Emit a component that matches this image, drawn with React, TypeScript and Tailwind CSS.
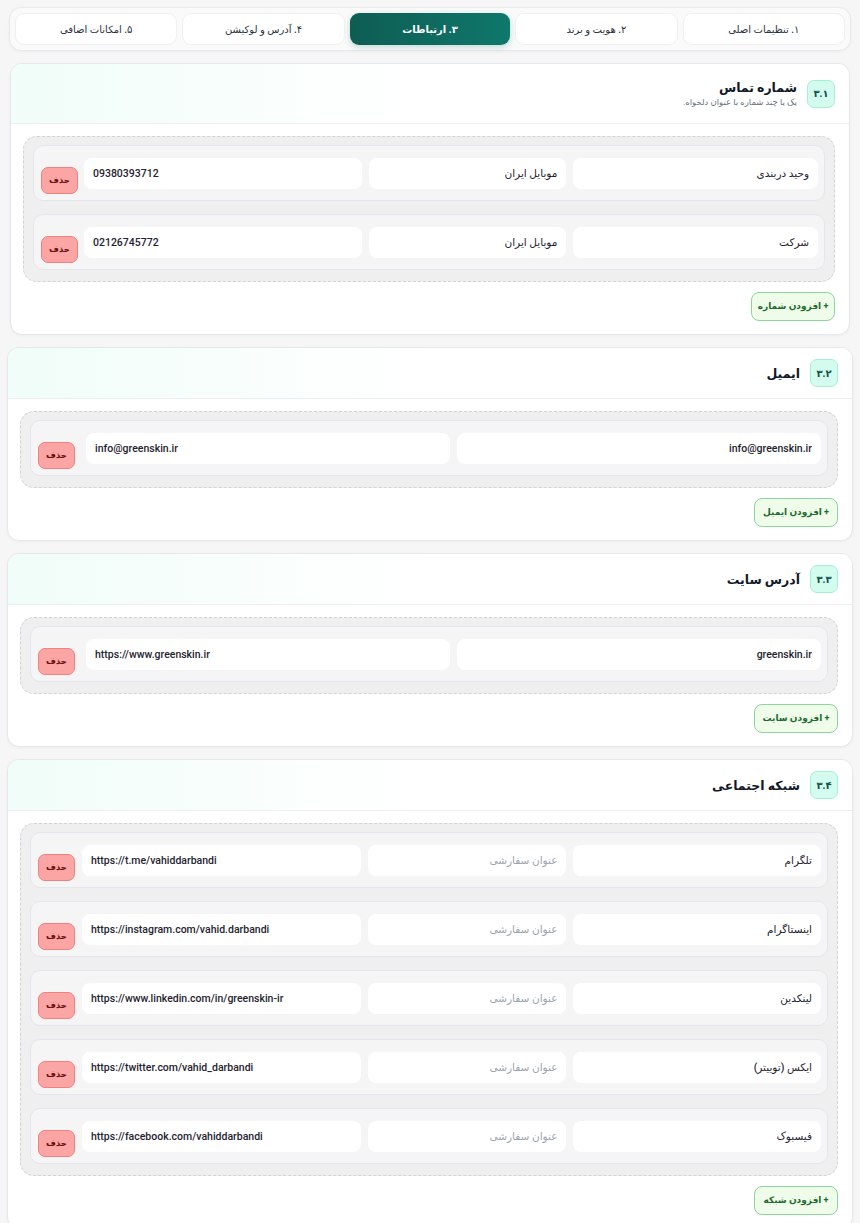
import React from "react";

const tabs = [
    { label: "۱. تنظیمات اصلی", active: false },
    { label: "۲. هویت و برند", active: false },
    { label: "۳. ارتباطات", active: true },
    { label: "۴. آدرس و لوکیشن", active: false },
    { label: "۵. امکانات اضافی", active: false },
];

const phones = [
    { title: "وحید دربندی", type: "موبایل ایران", number: "09380393712" },
    { title: "شرکت", type: "موبایل ایران", number: "02126745772" },
];

const socials = [
    { name: "تلگرام", url: "https://t.me/vahiddarbandi" },
    { name: "اینستاگرام", url: "https://instagram.com/vahid.darbandi" },
    { name: "لینکدین", url: "https://www.linkedin.com/in/greenskin-ir" },
    { name: "ایکس (توییتر)", url: "https://twitter.com/vahid_darbandi" },
    { name: "فیسبوک", url: "https://facebook.com/vahiddarbandi" },
];

const inputCls =
    "h-[31px] w-full min-w-0 rounded-[8px] bg-white px-[9px] text-[10.5px] font-medium text-[#1f2430] outline-none placeholder:text-[#9ca3af] placeholder:font-normal";

const Field = ({ value, placeholder, ltr }: { value?: string; placeholder?: string; ltr?: boolean }) => (
    <input
        readOnly
        dir={ltr ? "ltr" : "rtl"}
        defaultValue={value}
        placeholder={placeholder}
        className={inputCls + (ltr ? " text-left" : " text-right")}
    />
);

const DeleteBtn = () => (
    <button className="mt-[9px] h-[27px] w-[37px] shrink-0 rounded-[7px] border border-[#f47f7f] bg-[#fca5a5] text-[8.5px] font-bold text-[#6b1111]">
        حذف
    </button>
);

const AddBtn = ({ text }: { text: string }) => (
    <button className="h-[29px] w-[84px] whitespace-nowrap rounded-[8px] border border-[#8ad69b] bg-[#effce9] text-[9px] font-bold text-[#1d6b30]">
        {text}
    </button>
);

const Card = ({
    badge,
    title,
    subtitle,
    children,
    addText,
    className = "",
}: {
    badge: string;
    title: string;
    subtitle?: string;
    children: React.ReactNode;
    addText: string;
    className?: string;
}) => (
    <div className={"overflow-hidden rounded-[12px] border border-[#e6e7ec] bg-white shadow-[0_1px_3px_rgba(0,0,0,0.04)] " + className}>
        <div
            className={
                "flex items-center gap-[10px] border-b border-[#eceef2] bg-linear-to-r from-[#f0fdf9] to-white to-[50%] pr-[14px] " +
                (subtitle ? "py-[15px]" : "py-[11px]")
            }
        >
            <div className="flex h-[28px] w-[28px] shrink-0 items-center justify-center rounded-[7px] border border-[#a5f0d3] bg-[#d3fbee] text-[10px] font-bold text-[#11524a]">
                {badge}
            </div>
            <div className="flex flex-col">
                <div className="text-[12.5px] font-bold leading-[17px] text-[#111827]">{title}</div>
                {subtitle && <div className="text-[8.5px] leading-[12px] text-[#6b7280]">{subtitle}</div>}
            </div>
        </div>
        <div className="pb-[13px] pl-[12px] pr-[14px] pt-[12px]">
            <div className="flex flex-col gap-[13px] rounded-[14px] border border-dashed border-[#d2d3d8] bg-[#efeff0] px-[9px] pb-[11px] pt-[8px]">
                {children}
            </div>
            <div className="mt-[10px] flex">
                <AddBtn text={addText} />
            </div>
        </div>
    </div>
);

const Row = ({ children, gap }: { children: React.ReactNode; gap: string }) => (
    <div className={"flex items-start rounded-[10px] border border-[#e3e6ee] bg-[#f5f5f6] pb-[6px] pl-[7px] pr-[6px] pt-[12px] " + gap}>
        {children}
    </div>
);

export default function App() {
    return (
        <div
            dir="rtl"
            className="min-h-screen bg-[#f6f6f7] px-[7px] pb-[2px] pt-[7px] font-['Roboto','DejaVu_Sans',sans-serif]"
        >
            <div className="mx-[2px] flex gap-[5px] rounded-[12px] border border-[#e9e9ec] bg-[#fafafa] p-[5px] shadow-[0_1px_3px_rgba(0,0,0,0.04)]">
                {tabs.map((t) => (
                    <div
                        key={t.label}
                        className={
                            "flex h-[32px] flex-1 items-center justify-center rounded-[9px] text-[10px] " +
                            (t.active
                                ? "bg-linear-to-l from-[#0f776b] to-[#0e5d53] font-bold text-white shadow-[0_2px_6px_rgba(15,118,110,0.25)]"
                                : "border border-[#f0f0f2] bg-white font-medium text-[#2b3240]")
                        }
                    >
                        {t.label}
                    </div>
                ))}
            </div>

            <div className="mt-[12px] flex flex-col gap-[12px]">
                <Card
                    badge="۳.۱"
                    title="شماره تماس"
                    subtitle="یک یا چند شماره با عنوان دلخواه."
                    addText="+ افزودن شماره"
                    className="mx-[3px]"
                >
                    {phones.map((p) => (
                        <Row key={p.number} gap="gap-[6px]">
                            <div className="grid flex-1 grid-cols-[247fr_199fr_281fr] gap-[7px]">
                                <Field value={p.title} />
                                <Field value={p.type} />
                                <Field value={p.number} ltr />
                            </div>
                            <DeleteBtn />
                        </Row>
                    ))}
                </Card>

                <Card badge="۳.۲" title="ایمیل" addText="+ افزودن ایمیل">
                    <Row gap="gap-[11px]">
                        <div className="grid flex-1 grid-cols-2 gap-[7px]">
                            <Field value="info@greenskin.ir" />
                            <Field value="info@greenskin.ir" ltr />
                        </div>
                        <DeleteBtn />
                    </Row>
                </Card>

                <Card badge="۳.۳" title="آدرس سایت" addText="+ افزودن سایت">
                    <Row gap="gap-[11px]">
                        <div className="grid flex-1 grid-cols-2 gap-[7px]">
                            <Field value="greenskin.ir" />
                            <Field value="https://www.greenskin.ir" ltr />
                        </div>
                        <DeleteBtn />
                    </Row>
                </Card>

                <Card badge="۳.۴" title="شبکه اجتماعی" addText="+ افزودن شبکه">
                    {socials.map((s) => (
                        <Row key={s.name} gap="gap-[7px]">
                            <div className="grid flex-1 grid-cols-[251fr_201fr_283fr] gap-[7px]">
                                <Field value={s.name} />
                                <Field placeholder="عنوان سفارشی" />
                                <Field value={s.url} ltr />
                            </div>
                            <DeleteBtn />
                        </Row>
                    ))}
                </Card>
            </div>
        </div>
    );
}
